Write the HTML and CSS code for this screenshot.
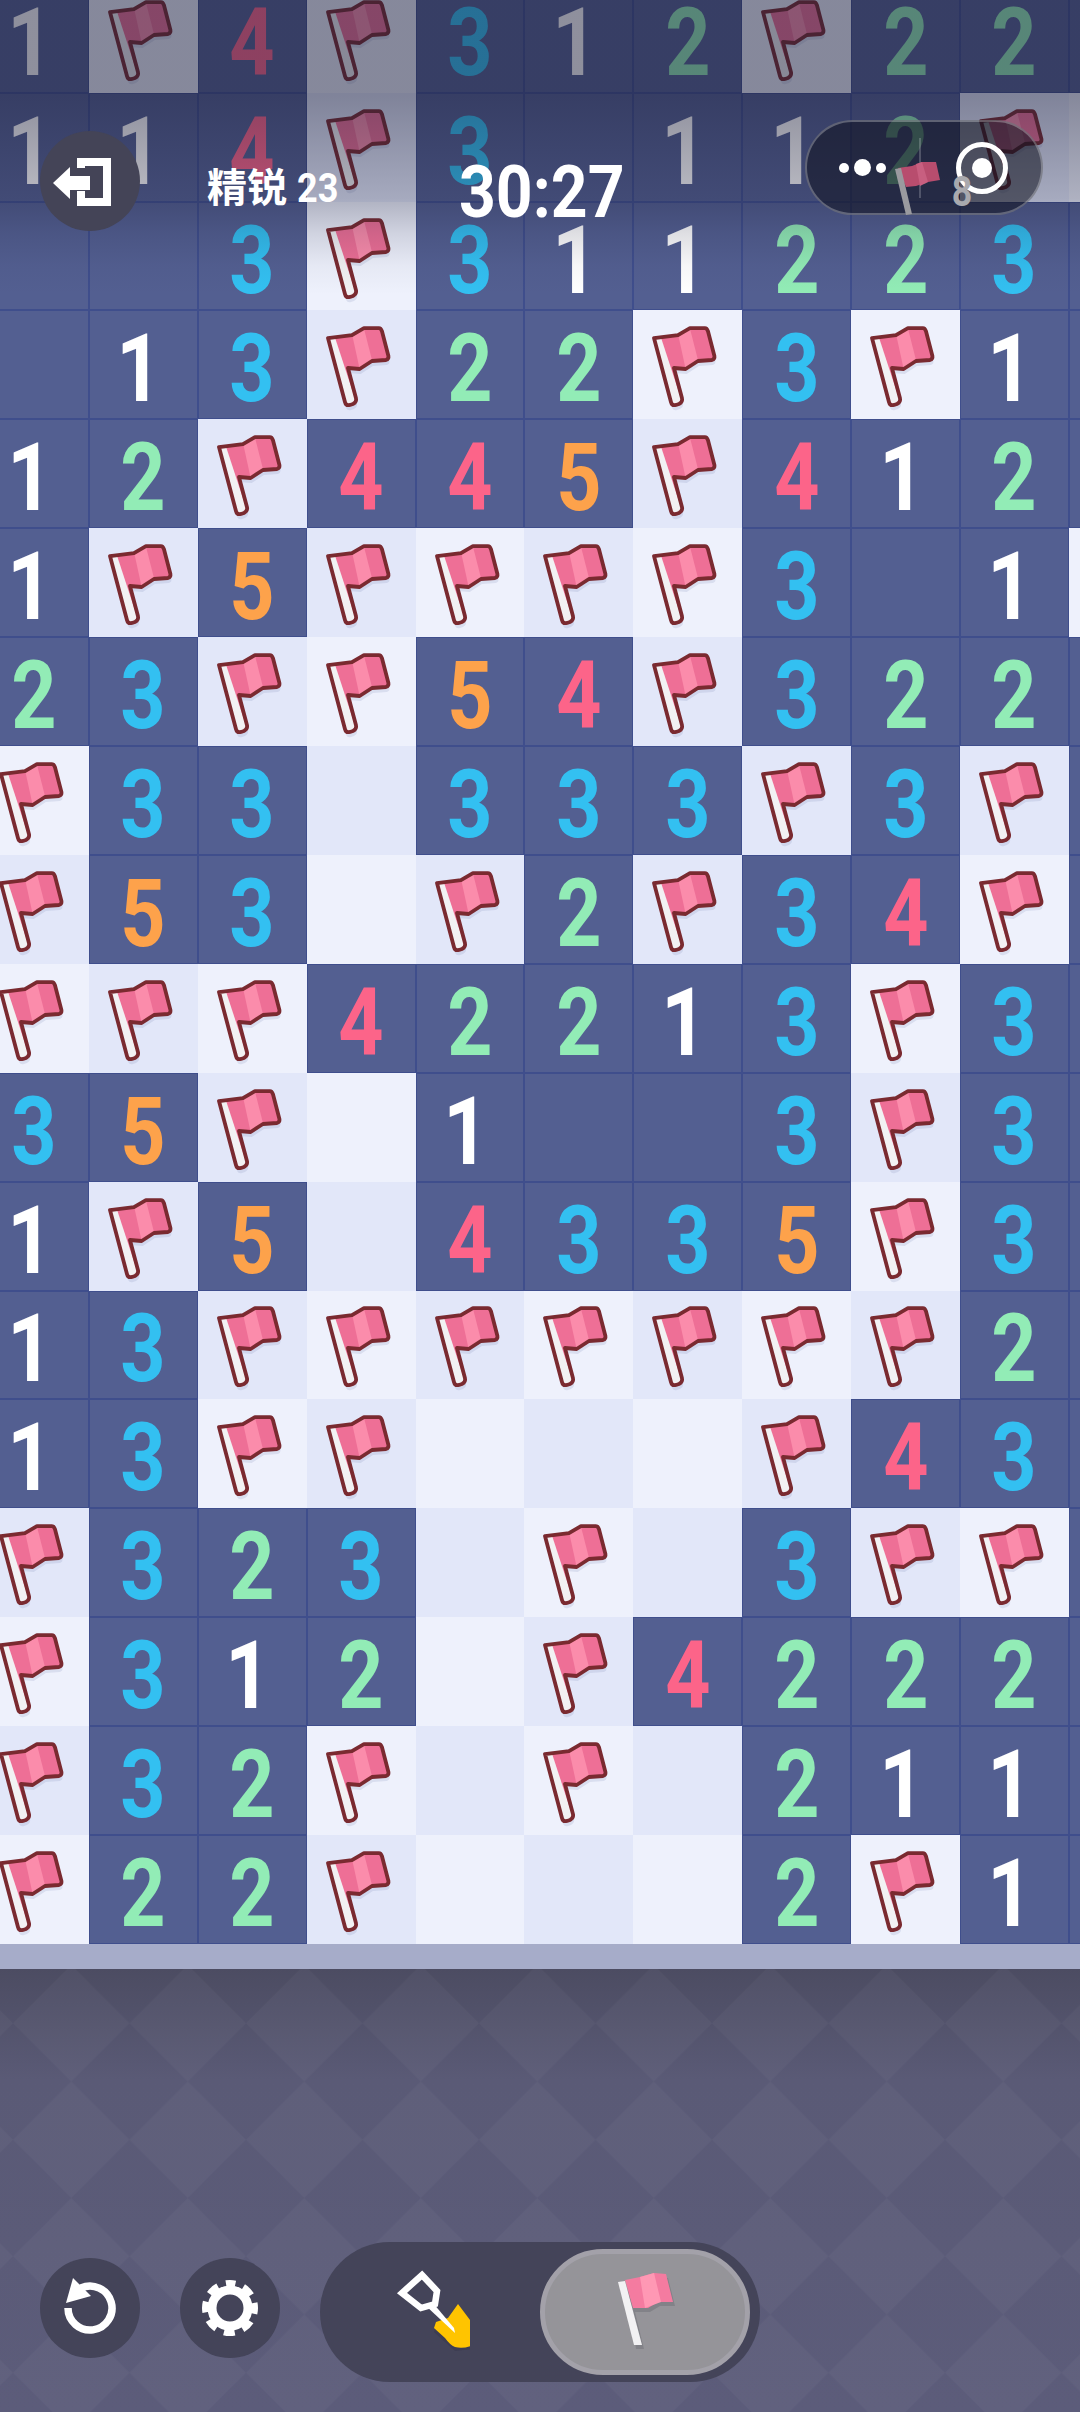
FILE: index.html
```html
<!DOCTYPE html>
<html lang="zh">
<head>
	<title>扫雷</title>
	<meta charset="utf-8">
	<link rel="stylesheet" href="styles.css">
</head>
<body>
	<!-- flag used by every flagged cell -->
	<svg class="defs" width="0" height="0">
		<symbol id="flag" viewBox="0 0 109 109">
			<path d="M21 28L45 25L57 18L72 18Q74 18 75 21L81.5 46Q82 49 79 50L65 51L52.7 59L41 58L49 88Q50 92 46 94L43 95Q39 96 38 92Z" fill="#5b6aa6" opacity=".14" transform="translate(1 5)"/>
			<path d="M21 28L45 25L57 18L72 18Q74 18 75 21L81.5 46Q82 49 79 50L65 51L52.7 59L41 58L49 88Q50 92 46 94L43 95Q39 96 38 92Z" fill="#ee6f96"/>
			<polygon points="45.3,25 57,18.5 65.3,51 52.7,59" fill="#fb8cab"/>
			<polygon points="21,28 28,27.4 48.5,90 44,95 38,92" fill="#f2f1f3"/>
			<path d="M21 28L45 25L57 18L72 18Q74 18 75 21L81.5 46Q82 49 79 50L65 51L52.7 59L41 58L49 88Q50 92 46 94L43 95Q39 96 38 92Z" fill="none" stroke="#7a2a30" stroke-width="3.8" stroke-linejoin="round"/>
		</symbol>
	</svg>

	<div class="board">
		<div class="row">
			<div class="c n1"><span>1</span></div><div class="c l"><svg class="flag"><use href="#flag"/></svg></div><div class="c n4"><span>4</span></div><div class="c l"><svg class="flag"><use href="#flag"/></svg></div><div class="c n3"><span>3</span></div><div class="c n1"><span>1</span></div><div class="c n2"><span>2</span></div><div class="c l"><svg class="flag"><use href="#flag"/></svg></div><div class="c n2"><span>2</span></div><div class="c n2"><span>2</span></div><div class="c"></div>
		</div>
		<div class="row">
			<div class="c n1"><span>1</span></div><div class="c n1"><span>1</span></div><div class="c n4"><span>4</span></div><div class="c l"><svg class="flag"><use href="#flag"/></svg></div><div class="c n3"><span>3</span></div><div class="c"></div><div class="c n1"><span>1</span></div><div class="c n1"><span>1</span></div><div class="c n2"><span>2</span></div><div class="c l"><svg class="flag"><use href="#flag"/></svg></div><div class="c l"></div>
		</div>
		<div class="row">
			<div class="c"></div><div class="c"></div><div class="c n3"><span>3</span></div><div class="c l"><svg class="flag"><use href="#flag"/></svg></div><div class="c n3"><span>3</span></div><div class="c n1"><span>1</span></div><div class="c n1"><span>1</span></div><div class="c n2"><span>2</span></div><div class="c n2"><span>2</span></div><div class="c n3"><span>3</span></div><div class="c"></div>
		</div>
		<div class="row">
			<div class="c"></div><div class="c n1"><span>1</span></div><div class="c n3"><span>3</span></div><div class="c l"><svg class="flag"><use href="#flag"/></svg></div><div class="c n2"><span>2</span></div><div class="c n2"><span>2</span></div><div class="c l"><svg class="flag"><use href="#flag"/></svg></div><div class="c n3"><span>3</span></div><div class="c l"><svg class="flag"><use href="#flag"/></svg></div><div class="c n1"><span>1</span></div><div class="c"></div>
		</div>
		<div class="row">
			<div class="c n1"><span>1</span></div><div class="c n2"><span>2</span></div><div class="c l"><svg class="flag"><use href="#flag"/></svg></div><div class="c n4"><span>4</span></div><div class="c n4"><span>4</span></div><div class="c n5"><span>5</span></div><div class="c l"><svg class="flag"><use href="#flag"/></svg></div><div class="c n4"><span>4</span></div><div class="c n1"><span>1</span></div><div class="c n2"><span>2</span></div><div class="c"></div>
		</div>
		<div class="row">
			<div class="c n1"><span>1</span></div><div class="c l"><svg class="flag"><use href="#flag"/></svg></div><div class="c n5"><span>5</span></div><div class="c l"><svg class="flag"><use href="#flag"/></svg></div><div class="c l"><svg class="flag"><use href="#flag"/></svg></div><div class="c l"><svg class="flag"><use href="#flag"/></svg></div><div class="c l"><svg class="flag"><use href="#flag"/></svg></div><div class="c n3"><span>3</span></div><div class="c"></div><div class="c n1"><span>1</span></div><div class="c l"></div>
		</div>
		<div class="row">
			<div class="c n2"><span>2</span></div><div class="c n3"><span>3</span></div><div class="c l"><svg class="flag"><use href="#flag"/></svg></div><div class="c l"><svg class="flag"><use href="#flag"/></svg></div><div class="c n5"><span>5</span></div><div class="c n4"><span>4</span></div><div class="c l"><svg class="flag"><use href="#flag"/></svg></div><div class="c n3"><span>3</span></div><div class="c n2"><span>2</span></div><div class="c n2"><span>2</span></div><div class="c"></div>
		</div>
		<div class="row">
			<div class="c l"><svg class="flag"><use href="#flag"/></svg></div><div class="c n3"><span>3</span></div><div class="c n3"><span>3</span></div><div class="c l"></div><div class="c n3"><span>3</span></div><div class="c n3"><span>3</span></div><div class="c n3"><span>3</span></div><div class="c l"><svg class="flag"><use href="#flag"/></svg></div><div class="c n3"><span>3</span></div><div class="c l"><svg class="flag"><use href="#flag"/></svg></div><div class="c"></div>
		</div>
		<div class="row">
			<div class="c l"><svg class="flag"><use href="#flag"/></svg></div><div class="c n5"><span>5</span></div><div class="c n3"><span>3</span></div><div class="c l"></div><div class="c l"><svg class="flag"><use href="#flag"/></svg></div><div class="c n2"><span>2</span></div><div class="c l"><svg class="flag"><use href="#flag"/></svg></div><div class="c n3"><span>3</span></div><div class="c n4"><span>4</span></div><div class="c l"><svg class="flag"><use href="#flag"/></svg></div><div class="c"></div>
		</div>
		<div class="row">
			<div class="c l"><svg class="flag"><use href="#flag"/></svg></div><div class="c l"><svg class="flag"><use href="#flag"/></svg></div><div class="c l"><svg class="flag"><use href="#flag"/></svg></div><div class="c n4"><span>4</span></div><div class="c n2"><span>2</span></div><div class="c n2"><span>2</span></div><div class="c n1"><span>1</span></div><div class="c n3"><span>3</span></div><div class="c l"><svg class="flag"><use href="#flag"/></svg></div><div class="c n3"><span>3</span></div><div class="c"></div>
		</div>
		<div class="row">
			<div class="c n3"><span>3</span></div><div class="c n5"><span>5</span></div><div class="c l"><svg class="flag"><use href="#flag"/></svg></div><div class="c l"></div><div class="c n1"><span>1</span></div><div class="c"></div><div class="c"></div><div class="c n3"><span>3</span></div><div class="c l"><svg class="flag"><use href="#flag"/></svg></div><div class="c n3"><span>3</span></div><div class="c"></div>
		</div>
		<div class="row">
			<div class="c n1"><span>1</span></div><div class="c l"><svg class="flag"><use href="#flag"/></svg></div><div class="c n5"><span>5</span></div><div class="c l"></div><div class="c n4"><span>4</span></div><div class="c n3"><span>3</span></div><div class="c n3"><span>3</span></div><div class="c n5"><span>5</span></div><div class="c l"><svg class="flag"><use href="#flag"/></svg></div><div class="c n3"><span>3</span></div><div class="c"></div>
		</div>
		<div class="row">
			<div class="c n1"><span>1</span></div><div class="c n3"><span>3</span></div><div class="c l"><svg class="flag"><use href="#flag"/></svg></div><div class="c l"><svg class="flag"><use href="#flag"/></svg></div><div class="c l"><svg class="flag"><use href="#flag"/></svg></div><div class="c l"><svg class="flag"><use href="#flag"/></svg></div><div class="c l"><svg class="flag"><use href="#flag"/></svg></div><div class="c l"><svg class="flag"><use href="#flag"/></svg></div><div class="c l"><svg class="flag"><use href="#flag"/></svg></div><div class="c n2"><span>2</span></div><div class="c"></div>
		</div>
		<div class="row">
			<div class="c n1"><span>1</span></div><div class="c n3"><span>3</span></div><div class="c l"><svg class="flag"><use href="#flag"/></svg></div><div class="c l"><svg class="flag"><use href="#flag"/></svg></div><div class="c l"></div><div class="c l"></div><div class="c l"></div><div class="c l"><svg class="flag"><use href="#flag"/></svg></div><div class="c n4"><span>4</span></div><div class="c n3"><span>3</span></div><div class="c"></div>
		</div>
		<div class="row">
			<div class="c l"><svg class="flag"><use href="#flag"/></svg></div><div class="c n3"><span>3</span></div><div class="c n2"><span>2</span></div><div class="c n3"><span>3</span></div><div class="c l"></div><div class="c l"><svg class="flag"><use href="#flag"/></svg></div><div class="c l"></div><div class="c n3"><span>3</span></div><div class="c l"><svg class="flag"><use href="#flag"/></svg></div><div class="c l"><svg class="flag"><use href="#flag"/></svg></div><div class="c"></div>
		</div>
		<div class="row">
			<div class="c l"><svg class="flag"><use href="#flag"/></svg></div><div class="c n3"><span>3</span></div><div class="c n1"><span>1</span></div><div class="c n2"><span>2</span></div><div class="c l"></div><div class="c l"><svg class="flag"><use href="#flag"/></svg></div><div class="c n4"><span>4</span></div><div class="c n2"><span>2</span></div><div class="c n2"><span>2</span></div><div class="c n2"><span>2</span></div><div class="c"></div>
		</div>
		<div class="row">
			<div class="c l"><svg class="flag"><use href="#flag"/></svg></div><div class="c n3"><span>3</span></div><div class="c n2"><span>2</span></div><div class="c l"><svg class="flag"><use href="#flag"/></svg></div><div class="c l"></div><div class="c l"><svg class="flag"><use href="#flag"/></svg></div><div class="c l"></div><div class="c n2"><span>2</span></div><div class="c n1"><span>1</span></div><div class="c n1"><span>1</span></div><div class="c"></div>
		</div>
		<div class="row">
			<div class="c l"><svg class="flag"><use href="#flag"/></svg></div><div class="c n2"><span>2</span></div><div class="c n2"><span>2</span></div><div class="c l"><svg class="flag"><use href="#flag"/></svg></div><div class="c l"></div><div class="c l"></div><div class="c l"></div><div class="c n2"><span>2</span></div><div class="c l"><svg class="flag"><use href="#flag"/></svg></div><div class="c n1"><span>1</span></div><div class="c"></div>
		</div>
	</div>
	<div class="rim"></div>

	<div class="floor">
		<svg class="diamonds" width="1080" height="443">
			<defs>
				<pattern id="tile" x="13" y="-4" width="116.5" height="116.5" patternUnits="userSpaceOnUse">
					<polygon points="58.25,0 116.5,58.25 58.25,116.5 0,58.25" fill="#fff"/>
				</pattern>
			</defs>
			<rect width="1080" height="443" fill="url(#tile)" opacity=".03"/>
		</svg>
		<div class="tools">
			<div class="round">
				<svg width="100" height="100" viewBox="0 0 100 100">
					<path d="M41 30A22 22 0 1 1 28 50" fill="none" stroke="#fff" stroke-width="7.5"/>
					<polygon points="33,20 26,45 51,38" fill="#fff"/>
				</svg>
			</div>
			<div class="round">
				<svg width="100" height="100" viewBox="0 0 100 100">
					<circle cx="50" cy="50" r="18" fill="none" stroke="#fff" stroke-width="9"/>
					<circle cx="50" cy="50" r="23.5" fill="none" stroke="#fff" stroke-width="9" stroke-dasharray="10.5 8" stroke-dashoffset="5.25" transform="rotate(-90 50 50)"/>
				</svg>
			</div>
			<div class="mode">
				<div class="mode_item">
					<svg width="90" height="90" viewBox="0 0 90 90">
						<path d="M78 37L90 53L95 68L93 78L75 80L65 71L54 61L56 55L68 51Z" fill="#35354a" opacity=".45" transform="translate(0 4)"/>
						<path d="M78 37L90 53L95 68L93 78Q84 82 75 80Q70 78 65 71L54 61L56 55L68 51Z" fill="#ffc400"/>
						<path d="M42 8L57 24L55 37L41 41L22 26Z" fill="none" stroke="#fff" stroke-width="6.5"/>
						<polygon points="46,39 53,36 74,61 75,66" fill="#fff"/>
					</svg>
				</div>
				<div class="mode_item on">
					<svg width="70" height="90" viewBox="0 0 70 90">
						<path d="M15 13L30 10L44 6L56 7L63 35L48 35L38 41L23 41L32 78L24 78Z" fill="#77767d" opacity=".6" transform="translate(2 4)"/>
						<path d="M15 13L30 10L44 6L56 7L63 35L48 35L38 41L23 41Z" fill="#f47ba0"/>
						<polygon points="30,10 44,6 51,35 35,41" fill="#ff98b4"/>
						<polygon points="8,15 15,14 32,78 24,78" fill="#f2f1f3"/>
					</svg>
				</div>
			</div>
		</div>
	</div>

	<!-- top bar, drawn over the board -->
	<div class="fade"></div>
	<div class="back">
		<svg width="100" height="100" viewBox="0 0 100 100">
			<path d="M41 37V31H67V71H41V60" fill="none" stroke="#fff" stroke-width="8"/>
			<polygon points="13,52 30,36 30,45 50,45 50,59 30,59 30,68" fill="#fff"/>
		</svg>
	</div>
	<div class="level">精锐 <span>23</span></div>
	<div class="timer">30:27</div>
	<div class="capsule">
		<div class="dots"><i></i><i class="big"></i><i></i></div>
		<div class="divider"></div>
		<div class="record"><i></i></div>
	</div>
	<div class="count">
		<svg width="50" height="54" viewBox="0 0 50 54">
			<path d="M6 6L20 4L30 0L44 0L48 18L36 20L24 24L14 25Z" fill="#b84d6e"/>
			<path d="M24 2L30 0L36 20L28 24Z" fill="#c85f80"/>
			<path d="M3 7L9 6L20 52L14 53Z" fill="#9a9a9f"/>
		</svg>
		<span>8</span>
	</div>
</body>
</html>
```

FILE: styles.css
```css
html, body {
	margin: 0;
	padding: 0;
	width: 1080px;
	height: 2412px;
	overflow: hidden;
	background-color: #4b4b61;
	font-family: Roboto, "Noto Sans CJK SC", sans-serif;
}

.defs {
	display: block;
	height: 0;
}

/* board: first column and row are cut by the window edge */
.board {
	margin-left: -20px;
	margin-top: -16.2px;
	width: 1198px;
}

.row {
	display: grid;
	grid-template-columns: repeat(11, 108.9px);
	height: 108.9px;
}

.c {
	display: flex;
	align-items: center;
	justify-content: center;
	background-color: #535f91;
	box-shadow: inset 0 0 0 1px #3f4e8c;
	font-size: 94px;
	font-weight: 700;
	line-height: 1;
	overflow: hidden;
}

.c span {
	display: block;
	margin-top: 9px;
	transform: scaleX(.84);
}

.n1 { color: #fff; }
.n2 { color: #92ecb6; }
.n3 { color: #33c0f1; }
.n4 { color: #fc6489; }
.n5 { color: #fda24b; }

.n1 span {
	margin-right: 8px;
}

.l {
	background-color: #eef1fc;
	box-shadow: none;
}

.row:nth-child(odd) .l:nth-child(odd),
.row:nth-child(even) .l:nth-child(even) {
	background-color: #e2e7f9;
}

.flag {
	width: 109px;
	height: 109px;
}

.rim {
	height: 25px;
	background-color: #a6acc9;
}

.floor {
	position: relative;
	height: 443px;
	background: linear-gradient(#4c4c62, #5a5a76 25%, #5c5c7a);
}

.diamonds {
	position: absolute;
	top: 0;
	left: 0;
}

.tools {
	position: relative;
	display: flex;
	align-items: flex-start;
	gap: 40px;
	padding: 273px 0 0 40px;
}

.round {
	width: 100px;
	height: 100px;
	margin-top: 16px;
	border-radius: 50%;
	background-color: #444459;
}

.round svg {
	display: block;
}

.mode {
	display: flex;
	align-items: center;
	justify-content: space-between;
	box-sizing: border-box;
	width: 440px;
	height: 140px;
	padding-right: 10px;
	border-radius: 70px;
	background-color: #444459;
}

.mode_item {
	display: flex;
	align-items: center;
	justify-content: center;
	width: 210px;
	height: 126px;
}

.mode_item.on {
	box-sizing: border-box;
	border: 5px solid #a3a1a9;
	border-radius: 63px;
	background-color: #959499;
}

/* top bar */
.fade {
	position: absolute;
	top: 0;
	left: 0;
	width: 1080px;
	height: 320px;
	background: linear-gradient(rgba(26, 28, 55, .49) 30%, rgba(26, 28, 55, .3) 62%, rgba(26, 28, 55, .14) 73%, rgba(26, 28, 55, .04) 83%, rgba(26, 28, 55, 0) 92%);
}

.back {
	position: absolute;
	top: 131px;
	left: 40px;
	width: 100px;
	height: 100px;
	border-radius: 50%;
	background-color: #444457;
}

.back svg {
	display: block;
}

.level {
	position: absolute;
	top: 165px;
	left: 207px;
	color: #fff;
	font-size: 40px;
	font-weight: 700;
	line-height: 48px;
}

.level span {
	display: inline-block;
	transform: scaleX(.9);
	transform-origin: left;
}

.timer {
	position: absolute;
	top: 150px;
	left: 459px;
	color: #fff;
	font-size: 73px;
	font-weight: 700;
	line-height: 84px;
	transform: scaleX(.88);
	transform-origin: left;
}

.count {
	position: absolute;
	top: 161px;
	left: 892px;
	display: flex;
	align-items: center;
	gap: 8px;
	color: #a9a9ae;
	font-size: 42px;
	font-weight: 700;
}

.count svg {
	display: block;
}

.count span {
	margin-top: 6px;
	transform: scaleX(.85);
}

.capsule {
	position: absolute;
	top: 120px;
	left: 805px;
	display: flex;
	align-items: center;
	box-sizing: border-box;
	width: 238px;
	height: 95px;
	border: 2px solid rgba(255, 255, 255, .28);
	border-radius: 48px;
	background-color: rgba(15, 17, 30, .55);
}

.dots {
	display: flex;
	align-items: center;
	gap: 5px;
	margin-left: 32px;
}

.dots i {
	width: 10px;
	height: 10px;
	border-radius: 50%;
	background-color: #fff;
}

.dots i.big {
	width: 17px;
	height: 17px;
}

.divider {
	width: 2px;
	height: 60px;
	margin-left: 33px;
	background-color: rgba(255, 255, 255, .2);
}

.record {
	display: flex;
	align-items: center;
	justify-content: center;
	box-sizing: border-box;
	width: 52px;
	height: 52px;
	margin-left: 35px;
	border: 5px solid #fff;
	border-radius: 50%;
}

.record i {
	width: 20px;
	height: 20px;
	border-radius: 50%;
	background-color: #fff;
}
```
